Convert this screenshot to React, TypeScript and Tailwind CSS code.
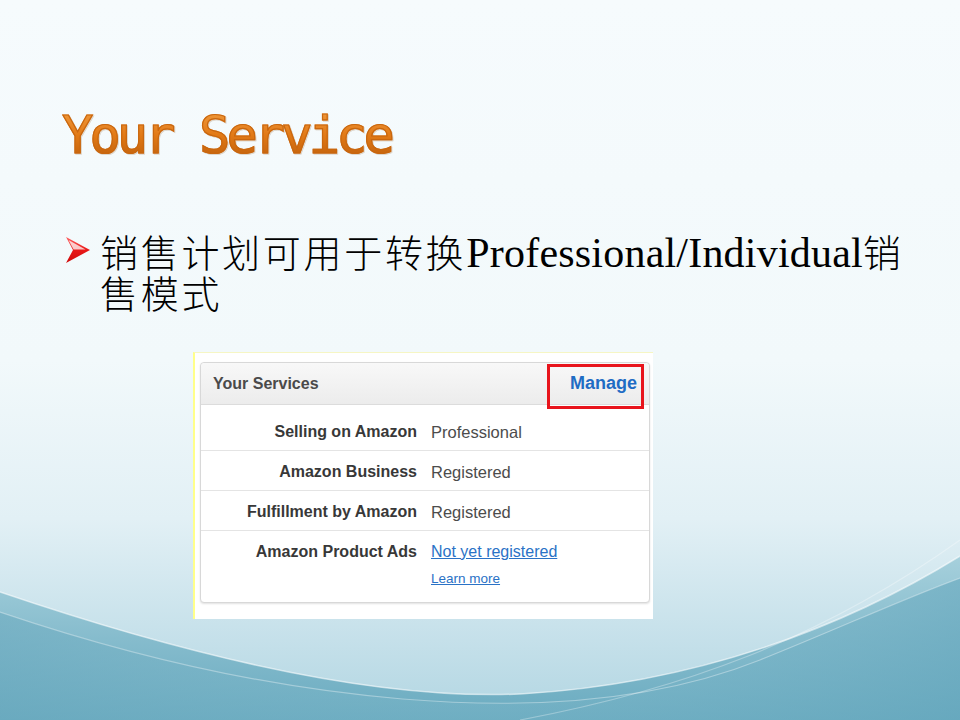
import React from "react";

function Background() {
  return (
    <svg
      className="absolute inset-0 h-full w-full"
      viewBox="0 0 960 720"
      preserveAspectRatio="none"
      aria-hidden="true"
    >
      <defs>
        <linearGradient id="bg" x1="0" y1="0" x2="0" y2="1">
          <stop offset="0" stopColor="#f6fbfd" />
          <stop offset="0.5" stopColor="#f2f9fb" />
          <stop offset="0.72" stopColor="#e2f0f5" />
          <stop offset="0.9" stopColor="#c3dfe9" />
          <stop offset="1" stopColor="#b2d6e2" />
        </linearGradient>
        <linearGradient id="wave1" x1="0" y1="0" x2="0" y2="1">
          <stop offset="0" stopColor="#a6d0dc" />
          <stop offset="0.5" stopColor="#86bccd" />
          <stop offset="1" stopColor="#6aabc0" />
        </linearGradient>
        <linearGradient id="wave2" x1="0" y1="0" x2="1" y2="0">
          <stop offset="0" stopColor="#6aa9be" stopOpacity="0.55" />
          <stop offset="0.5" stopColor="#7db7c9" stopOpacity="0.25" />
          <stop offset="1" stopColor="#65a7bd" stopOpacity="0.6" />
        </linearGradient>
      </defs>
      <rect x="0" y="0" width="960" height="720" fill="url(#bg)" />
      <path
        d="M0,592 C200,660 380,700 520,694 C700,684 850,624 960,556 L960,720 L0,720 Z"
        fill="url(#wave1)"
      />
      <path
        d="M0,612 C260,700 560,740 760,660 C840,628 900,600 960,578 L960,720 L0,720 Z"
        fill="url(#wave2)"
      />
      <path
        d="M0,592 C200,660 380,700 520,694 C700,684 850,624 960,556"
        fill="none"
        stroke="#ffffff"
        strokeOpacity="0.55"
        strokeWidth="1.5"
      />
      <path
        d="M0,612 C260,700 560,740 760,660 C840,628 900,600 960,578"
        fill="none"
        stroke="#ffffff"
        strokeOpacity="0.35"
        strokeWidth="1.2"
      />
      <path
        d="M520,720 C680,690 820,640 960,540"
        fill="none"
        stroke="#ffffff"
        strokeOpacity="0.3"
        strokeWidth="1.2"
      />
    </svg>
  );
}

function Arrow() {
  return (
    <svg width="24" height="26" viewBox="0 0 24 26" aria-hidden="true">
      <defs>
        <linearGradient id="arr" x1="0" y1="0" x2="0" y2="1">
          <stop offset="0" stopColor="#ff6060" />
          <stop offset="0.5" stopColor="#e81818" />
          <stop offset="1" stopColor="#d00a0a" />
        </linearGradient>
      </defs>
      <polygon points="0,0 24,13 0,26 7,13" fill="url(#arr)" />
      <polygon points="2.5,3 19.5,12.4 7.6,12.4" fill="#ffffff" fillOpacity="0.75" />
    </svg>
  );
}

const rows: { label: string; value: string; h: string; pt: string }[] = [
  { label: "Selling on Amazon", value: "Professional", h: "h-[46px]", pt: "pt-[17px]" },
  { label: "Amazon Business", value: "Registered", h: "h-[40px]", pt: "pt-[11px]" },
  { label: "Fulfillment by Amazon", value: "Registered", h: "h-[40px]", pt: "pt-[11px]" },
];

export default function App() {
  return (
    <div className="relative h-[720px] w-[960px] overflow-hidden">
      <Background />
      <div className="relative flex flex-col">
        {/* Title */}
        <div className="pl-[62px] pt-[105px]">
          <h1
            className="bg-linear-to-b from-[#f2a040] via-[#e27a16] to-[#b85a0a] bg-clip-text text-[52px] leading-[60px] font-normal tracking-[-3.9px] text-transparent [-webkit-text-stroke:1.2px_#c9670f] drop-shadow-[1px_1px_0px_rgba(120,60,0,0.18)]"
            style={{ fontFamily: '"DejaVu Sans Mono", monospace' }}
          >
            Your Service
          </h1>
        </div>

        {/* Bullet */}
        <div className="mt-[65px] flex pl-[66px]">
          <div className="mt-[7px] mr-[10px] shrink-0">
            <Arrow />
          </div>
          <div
            className="text-[38px] leading-[41px] font-light tracking-[2.7px] text-black"
            style={{ fontFamily: '"Noto Sans CJK SC", sans-serif' }}
          >
            <div>
              销售计划可用于转换
              <span
                className="text-[42px] leading-[20px] font-normal tracking-[0.2px]"
                style={{ fontFamily: '"Liberation Serif", serif' }}
              >
                Professional/Individual
              </span>
              销
            </div>
            <div>售模式</div>
          </div>
        </div>

        {/* Screenshot */}
        <div
          className="mt-[40px] ml-[193px] h-[267px] w-[460px] border-t border-l-2 border-t-[#f6f6c4] border-l-[#ffff8a] bg-white pt-[9px] pr-[3px] pl-[5px]"
          style={{ fontFamily: '"Liberation Sans", Arial, sans-serif' }}
        >
          <div className="relative rounded-[4px] border border-[#d8d8d8] bg-white shadow-[0_1px_2px_rgba(0,0,0,0.12)]">
            <div className="flex h-[42px] items-center justify-between rounded-t-[4px] border-b border-[#dcdcdc] bg-linear-to-b from-[#f8f8f8] to-[#ececec] pr-[12px] pl-[12px]">
              <span className="text-[16px] font-bold text-[#4a4a4a]">Your Services</span>
              <span className="text-[18px] font-bold text-[#1f6cc4]">Manage</span>
            </div>
            <div className="absolute top-[1px] right-[5px] h-[45px] w-[97px] border-[3px] border-[#e8141c]" />
            {rows.map((r) => (
              <div
                key={r.label}
                className={`grid grid-cols-[216px_1fr] gap-x-[14px] border-b border-[#e4e4e4] ${r.h} ${r.pt}`}
              >
                <span className="text-right text-[16px] leading-[20px] font-bold text-[#383838]">{r.label}</span>
                <span className="text-[16.5px] leading-[20px] text-[#4c4c4c]">{r.value}</span>
              </div>
            ))}
            <div className="grid h-[71px] grid-cols-[216px_1fr] gap-x-[14px] pt-[11px]">
              <span className="text-right text-[16px] leading-[20px] font-bold text-[#383838]">
                Amazon Product Ads
              </span>
              <div className="flex flex-col">
                <span className="text-[16px] leading-[20px] text-[#2a72c6] underline">Not yet registered</span>
                <span className="mt-[9px] text-[13.5px] leading-[16px] text-[#2a72c6] underline">Learn more</span>
              </div>
            </div>
          </div>
        </div>
      </div>
    </div>
  );
}
